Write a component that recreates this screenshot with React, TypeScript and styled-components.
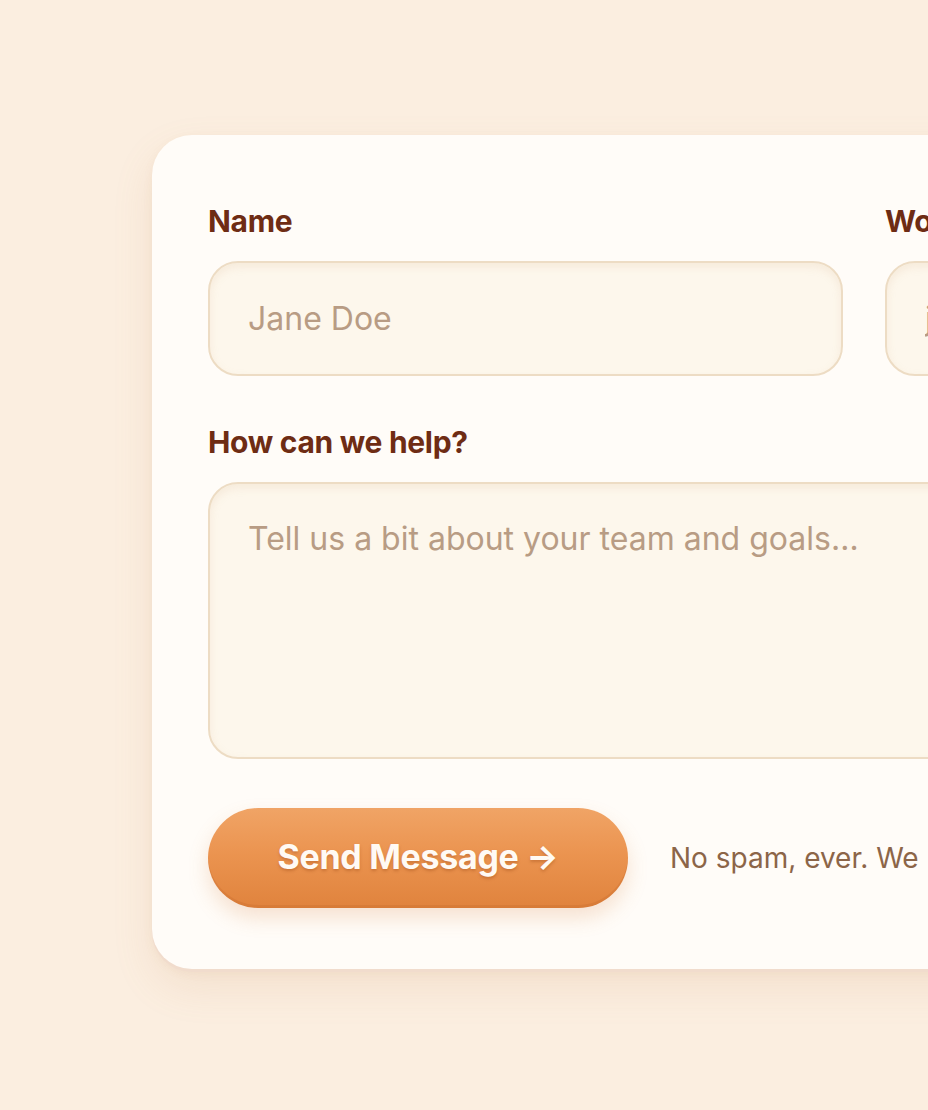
import styled, { createGlobalStyle } from "styled-components";

const GlobalStyle = createGlobalStyle`
  html, body {
    margin: 0;
    padding: 0;
    background: #fbeee0;
    overflow: hidden;
  }
  body {
    font-family: Inter, "Noto Sans", "Liberation Sans", sans-serif;
  }
`;

const Page = styled.div`
  padding: 135px 0 0 152px;
  min-height: 1110px;
  box-sizing: border-box;
`;

const Card = styled.form`
  width: 1424px;
  box-sizing: border-box;
  padding: 69px 56px 61px;
  background: #fffcf8;
  border-radius: 40px;
  box-shadow: 0 3px 0 #f1dccd, 0 18px 40px rgba(196, 140, 90, 0.14),
    0 4px 10px rgba(196, 140, 90, 0.08);
  display: flex;
  flex-direction: column;
  gap: 49px;
`;

const Row = styled.div<{ cols?: number }>`
  display: grid;
  grid-template-columns: repeat(${(p) => p.cols || 1}, 1fr);
  column-gap: 42px;
`;

const Field = styled.label`
  display: flex;
  flex-direction: column;
  gap: 23px;
`;

const Label = styled.span`
  font-size: 30px;
  line-height: 34px;
  font-weight: 700;
  color: #6e2c14;
  letter-spacing: -0.3px;
`;

const fieldBase = `
  box-sizing: border-box;
  width: 100%;
  background: #fdf7ec;
  border: 2px solid #eddcc4;
  border-radius: 30px;
  font-family: Inter, "Noto Sans", "Liberation Sans", sans-serif;
  font-size: 32px;
  color: #6e2c14;
  outline: none;
  box-shadow: inset 0 4px 8px rgba(214, 180, 140, 0.18);
  &::placeholder {
    color: #b89c84;
    opacity: 1;
  }
`;

const Input = styled.input`
  ${fieldBase}
  height: 115px;
  padding: 0 38px;
`;

const TextArea = styled.textarea`
  ${fieldBase}
  height: 277px;
  padding: 33px 38px;
  line-height: 1.4;
  resize: none;
`;

const Actions = styled.div`
  display: flex;
  align-items: center;
  gap: 42px;
`;

const SendButton = styled.button`
  width: 420px;
  height: 100px;
  padding: 0 0 4px;
  border: none;
  border-radius: 50px;
  background: linear-gradient(180deg, #f0a466 0%, #eb9450 45%, #e0833d 100%);
  color: #fffaf4;
  font-family: Inter, "Noto Sans", "Liberation Sans", sans-serif;
  font-size: 34px;
  font-weight: 700;
  letter-spacing: -0.3px;
  text-shadow: 0 2px 3px rgba(150, 70, 20, 0.35);
  box-shadow: 0 10px 20px rgba(214, 130, 70, 0.22),
    inset 0 -3px 0 rgba(190, 100, 40, 0.25);
  cursor: pointer;
  flex-shrink: 0;
`;

const Note = styled.span`
  font-size: 28px;
  color: #8c6548;
  white-space: nowrap;
`;

export default function App() {
  return (
    <>
      <GlobalStyle />
      <Page>
        <Card onSubmit={(e) => e.preventDefault()}>
          <Row cols={2}>
            <Field>
              <Label>Name</Label>
              <Input type="text" placeholder="Jane Doe" />
            </Field>
            <Field>
              <Label>Work email</Label>
              <Input type="email" placeholder="jane@company.com" />
            </Field>
          </Row>
          <Row>
            <Field>
              <Label>How can we help?</Label>
              <TextArea placeholder="Tell us a bit about your team and goals…" />
            </Field>
          </Row>
          <Actions>
            <SendButton type="submit">Send Message →</SendButton>
            <Note>No spam, ever. We reply within one business day.</Note>
          </Actions>
        </Card>
      </Page>
    </>
  );
}
